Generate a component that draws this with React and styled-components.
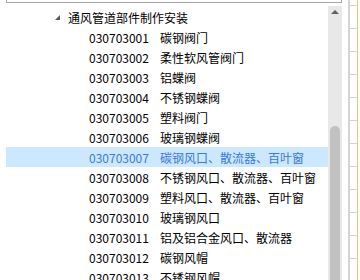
import React from "react";
import styled, { createGlobalStyle } from "styled-components";

const GlobalStyle = createGlobalStyle`
  html, body {
    margin: 0;
    padding: 0;
    background: #ffffff;
  }
  body {
    font-family: "Noto Sans CJK SC", "Noto Sans", sans-serif;
    font-size: 12px;
    color: #000000;
    overflow: hidden;
  }
`;

const Page = styled.div`
  width: 360px;
  height: 280px;
  display: flex;
  overflow: hidden;
`;

const LeftColumn = styled.div`
  width: 336px;
  margin-left: 6px;
  display: flex;
  flex-direction: column;
`;

const TopBox = styled.div`
  height: 2px;
  border: 1px solid #a6a6a6;
  border-top: none;
  margin-bottom: 3px;
`;

const TreePanel = styled.div`
  flex: 1;
  display: flex;
  min-height: 0;
`;

const TreeList = styled.div`
  flex: 1;
  padding-top: 1px;
  overflow: hidden;
`;

const Row = styled.div`
  height: 20px;
  display: flex;
  align-items: center;
  padding-left: ${(p) => p.$indent}px;
  background: ${(p) => (p.$selected ? "#cce8ff" : "transparent")};
  color: ${(p) => (p.$selected ? "#3a7ad8" : "#000000")};
  white-space: nowrap;
`;

const Expander = styled.span`
  width: 0;
  height: 0;
  border-left: 5px solid transparent;
  border-bottom: 5px solid #595959;
  margin-right: 8px;
  margin-top: 1px;
`;

const Code = styled.span`
  width: 71px;
  flex-shrink: 0;
`;

const Name = styled.span``;

const Scrollbar = styled.div`
  width: 14px;
  background: #e8e8e8;
  display: flex;
  flex-direction: column;
  align-items: center;
`;

const ArrowUp = styled.div`
  width: 0;
  height: 0;
  margin-top: 4px;
  border-left: 4px solid transparent;
  border-right: 4px solid transparent;
  border-bottom: 4px solid #606060;
`;

const Thumb = styled.div`
  width: 10px;
  margin-top: 112px;
  flex: 1;
  background: #c1c1c1;
  border-radius: 5px 5px 0 0;
`;

const SheetColumn = styled.div`
  margin-left: 6px;
  width: 12px;
  display: flex;
`;

const SheetHeader = styled.div`
  width: 2px;
  background: #d4d4d4;
`;

const SheetCells = styled.div`
  width: 7px;
  display: flex;
  flex-direction: column;
  padding-top: 5px;
`;

const Cell = styled.div`
  height: 22px;
  border-top: 1px solid #d4d4d4;
  flex-shrink: 0;
`;

const OrangeLine = styled.div`
  width: 1px;
  background: #f5c27a;
`;

const items = [
  ["030703001", "碳钢阀门"],
  ["030703002", "柔性软风管阀门"],
  ["030703003", "铝蝶阀"],
  ["030703004", "不锈钢蝶阀"],
  ["030703005", "塑料阀门"],
  ["030703006", "玻璃钢蝶阀"],
  ["030703007", "碳钢风口、散流器、百叶窗"],
  ["030703008", "不锈钢风口、散流器、百叶窗"],
  ["030703009", "塑料风口、散流器、百叶窗"],
  ["030703010", "玻璃钢风口"],
  ["030703011", "铝及铝合金风口、散流器"],
  ["030703012", "碳钢风帽"],
  ["030703013", "不锈钢风帽"],
];

export default function App() {
  return (
    <Page>
      <GlobalStyle />
      <LeftColumn>
        <TopBox />
        <TreePanel>
          <TreeList>
            <Row $indent={49}>
              <Expander />
              通风管道部件制作安装
            </Row>
            {items.map(([code, name]) => (
              <Row key={code} $indent={83} $selected={code === "030703007"}>
                <Code>{code}</Code>
                <Name>{name}</Name>
              </Row>
            ))}
          </TreeList>
          <Scrollbar>
            <ArrowUp />
            <Thumb />
          </Scrollbar>
        </TreePanel>
      </LeftColumn>
      <SheetColumn>
        <SheetHeader />
        <SheetCells>
          {Array.from({ length: 12 }).map((_, i) => (
            <Cell key={i} />
          ))}
        </SheetCells>
        <OrangeLine />
      </SheetColumn>
    </Page>
  );
}
